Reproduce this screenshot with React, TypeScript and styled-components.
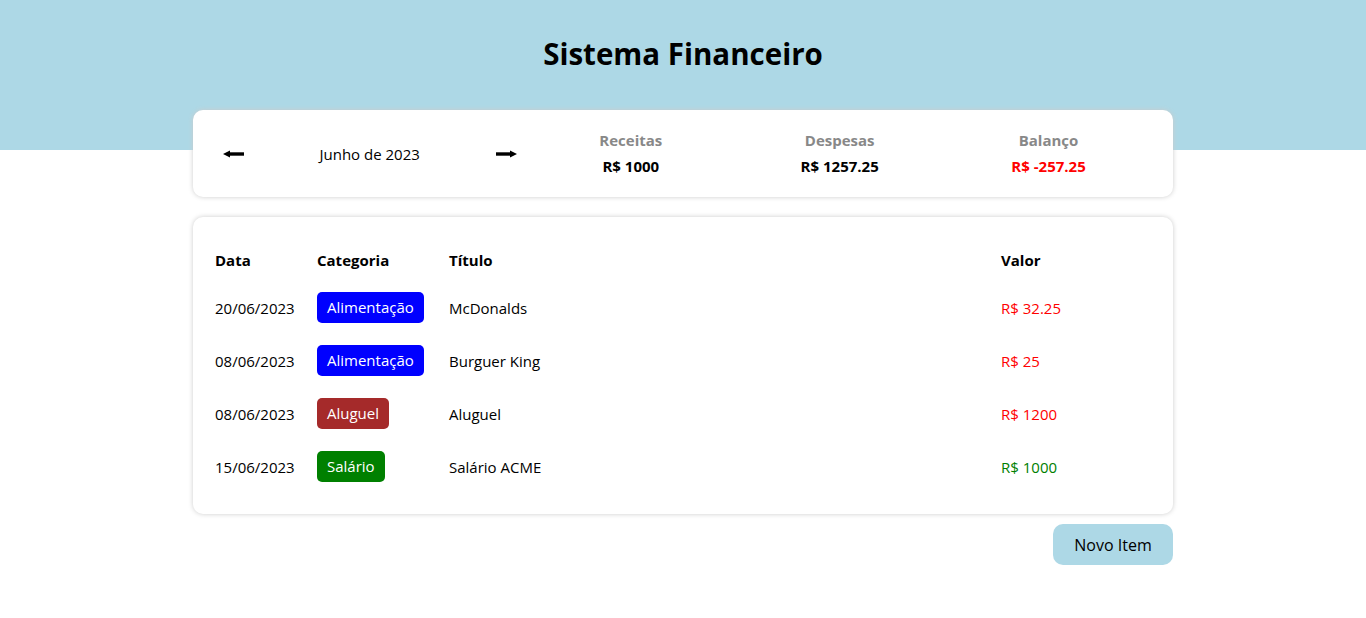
import React from 'react';
import styled, { createGlobalStyle } from 'styled-components';

const GlobalStyle = createGlobalStyle`
  body {
    margin: 0;
    font-family: 'Segoe UI', 'Open Sans', 'Noto Sans', sans-serif;
    background: #fff;
    color: #000;
  }
`;

const Header = styled.div`
  background-color: lightblue;
  height: 150px;
  text-align: center;
`;

const HeaderText = styled.h1`
  margin: 0;
  padding-top: 34px;
  font-size: 29.5px;
  line-height: 40px;
  font-weight: bold;
`;

const Body = styled.div`
  width: 980px;
  margin: -40px auto 0;
`;

const Card = styled.div<{ $gap?: number }>`
  background-color: #fff;
  box-shadow: 0 0 5px #ccc;
  border-radius: 10px;
  padding: 20px;
  margin-bottom: ${(p) => p.$gap ?? 0}px;
`;

const InfoRow = styled.div`
  display: flex;
  align-items: center;
`;

const MonthArea = styled.div`
  flex: 1;
  display: flex;
  align-items: center;
`;

const MonthArrow = styled.div`
  width: 40px;
  display: flex;
  justify-content: center;
  cursor: pointer;
  font-size: 0;
`;

const MonthTitle = styled.div`
  flex: 1;
  text-align: center;
  font-size: 15px;
`;

const ResumeArea = styled.div`
  flex: 2;
  display: flex;
`;

const ResumeItem = styled.div`
  flex: 1;
  text-align: center;
  display: flex;
  flex-direction: column;
  gap: 5px;
`;

const ResumeTitle = styled.div`
  color: #888;
  font-weight: bold;
  font-size: 15px;
  line-height: 21px;
`;

const ResumeValue = styled.div<{ $color?: string }>`
  color: ${(p) => p.$color ?? '#000'};
  font-weight: bold;
  font-size: 15px;
  line-height: 21px;
`;

const Table = styled.table`
  width: 100%;
  border-spacing: 2px;
  font-size: 15px;
`;

const Th = styled.th<{ $width?: number }>`
  width: ${(p) => (p.$width ? `${p.$width}px` : 'auto')};
  padding: 11px 0 9px;
  text-align: left;
  line-height: 21px;
`;

const Td = styled.td`
  padding: 10px 0;
  line-height: 21px;
`;

const Text = styled.div`
  padding-top: 1px;
`;

const Category = styled.div<{ $color: string }>`
  display: inline-block;
  padding: 5px 10px;
  border-radius: 5px;
  color: #fff;
  background-color: ${(p) => p.$color};
`;

const Value = styled(Text)<{ $color: string }>`
  color: ${(p) => p.$color};
`;

const Footer = styled.div`
  display: flex;
  justify-content: flex-end;
  margin-top: 10px;
`;

const Button = styled.button`
  width: 120px;
  height: 41px;
  border: 0;
  border-radius: 10px;
  background-color: lightblue;
  font-family: inherit;
  font-size: 16px;
  color: #000;
  cursor: pointer;
`;

const Arrow = ({ dir }: { dir: 'left' | 'right' }) => (
  <svg width="21" height="8" viewBox="0 0 21 8">
    <g transform={dir === 'right' ? 'matrix(-1 0 0 1 21 0)' : undefined}>
      <polygon points="0,4 7,0.5 7,7.5" fill="#000" />
      <rect x="6" y="2.3" width="15" height="3.4" fill="#000" />
    </g>
  </svg>
);

type Item = { date: string; category: string; color: string; title: string; value: number; expense: boolean };

const items: Item[] = [
  { date: '20/06/2023', category: 'Alimentação', color: 'blue', title: 'McDonalds', value: 32.25, expense: true },
  { date: '08/06/2023', category: 'Alimentação', color: 'blue', title: 'Burguer King', value: 25, expense: true },
  { date: '08/06/2023', category: 'Aluguel', color: 'brown', title: 'Aluguel', value: 1200, expense: true },
  { date: '15/06/2023', category: 'Salário', color: 'green', title: 'Salário ACME', value: 1000, expense: false },
];

export default function App() {
  const income = items.filter((i) => !i.expense).reduce((s, i) => s + i.value, 0);
  const expense = items.filter((i) => i.expense).reduce((s, i) => s + i.value, 0);
  const balance = income - expense;

  return (
    <>
      <GlobalStyle />
      <Header>
        <HeaderText>Sistema Financeiro</HeaderText>
      </Header>
      <Body>
        <Card $gap={20}>
          <InfoRow>
            <MonthArea>
              <MonthArrow><Arrow dir="left" /></MonthArrow>
              <MonthTitle>Junho de 2023</MonthTitle>
              <MonthArrow><Arrow dir="right" /></MonthArrow>
            </MonthArea>
            <ResumeArea>
              <ResumeItem>
                <ResumeTitle>Receitas</ResumeTitle>
                <ResumeValue>R$ {income}</ResumeValue>
              </ResumeItem>
              <ResumeItem>
                <ResumeTitle>Despesas</ResumeTitle>
                <ResumeValue>R$ {expense}</ResumeValue>
              </ResumeItem>
              <ResumeItem>
                <ResumeTitle>Balanço</ResumeTitle>
                <ResumeValue $color={balance < 0 ? 'red' : 'green'}>R$ {balance}</ResumeValue>
              </ResumeItem>
            </ResumeArea>
          </InfoRow>
        </Card>
        <Card>
          <Table>
            <thead>
              <tr>
                <Th $width={100}>Data</Th>
                <Th $width={130}>Categoria</Th>
                <Th>Título</Th>
                <Th $width={150}>Valor</Th>
              </tr>
            </thead>
            <tbody>
              {items.map((item, idx) => (
                <tr key={idx}>
                  <Td><Text>{item.date}</Text></Td>
                  <Td>
                    <Category $color={item.color}>{item.category}</Category>
                  </Td>
                  <Td><Text>{item.title}</Text></Td>
                  <Td>
                    <Value $color={item.expense ? 'red' : 'green'}>R$ {item.value}</Value>
                  </Td>
                </tr>
              ))}
            </tbody>
          </Table>
        </Card>
        <Footer>
          <Button>Novo Item</Button>
        </Footer>
      </Body>
    </>
  );
}
